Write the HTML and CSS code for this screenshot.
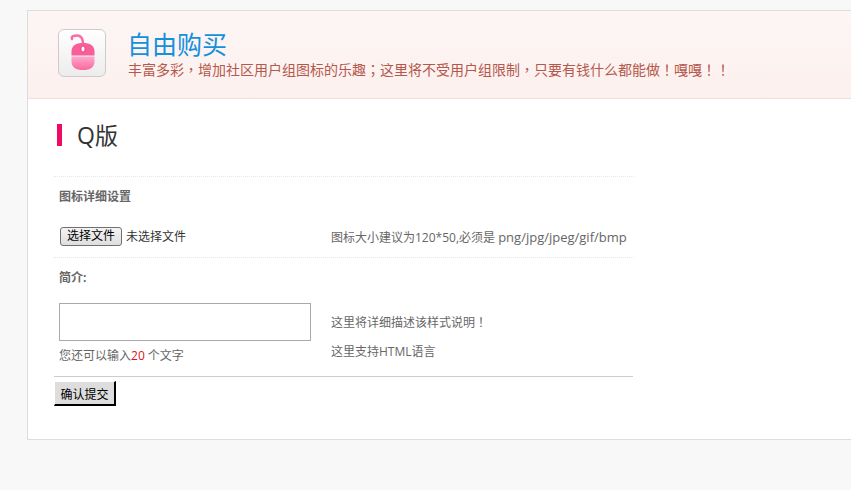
FILE: index.html
```html
<!DOCTYPE html>
<html lang="zh">
<head>
<meta charset="utf-8">
<title>自由购买</title>
<link rel="stylesheet" href="styles.css">
</head>
<body>
<main class="panel">
  <header class="head">
    <div class="logo">
      <svg width="46" height="46" viewBox="0 0 46 46">
        <defs>
          <linearGradient id="lower" x1="0" y1="0" x2="0" y2="1">
            <stop offset="0" stop-color="#ffa9ca"/>
            <stop offset="1" stop-color="#f9689f"/>
          </linearGradient>
        </defs>
        <path d="M13 9C12 6 15 5.500 18 5.500C22 5.500 24 9 24 14" class="cord"/>
        <path d="M12.500 25.500V21.500C12.500 15.500 17 13 24 13C31 13 35.500 15.500 35.500 21.500V25.500Z" class="m1"/>
        <path d="M12.500 26.500H35.500V31.500C35.500 37.500 31 40 24 40C17 40 12.500 37.500 12.500 31.500Z" fill="url(#lower)"/>
        <rect x="22" y="16" width="4" height="6" rx="2" class="wheel"/>
      </svg>
    </div>
    <div class="head-text">
      <h1>自由购买</h1>
      <p>丰富多彩<span class="pc" lang="zh-TW">，</span>增加社区用户组图标的乐趣<span class="pc" lang="zh-TW">；</span>这里将不受用户组限制<span class="pc" lang="zh-TW">，</span>只要有钱什么都能做<span class="pc" lang="zh-TW">！</span>嘎嘎<span class="pc" lang="zh-TW">！！</span></p>
    </div>
  </header>
  <section class="body">
    <h2>Q版</h2>
    <form class="form">
      <div class="row-title dotted"><b>图标详细设置</b></div>
      <div class="row file-row">
        <div class="col-a file-pick">
          <button class="file-btn" type="button">选择文件</button>
          <span class="file-name">未选择文件</span>
        </div>
        <div class="col-b">图标大小建议为120*50,必须是 <span class="ext">png/jpg/jpeg/gif/bmp</span></div>
      </div>
      <div class="row-title dotted"><b>简介:</b></div>
      <div class="row desc-row">
        <div class="col-a">
          <input class="text" type="text">
          <div class="count">您还可以输入<span class="red">20</span> 个文字</div>
        </div>
        <div class="col-b notes">
          <div>这里将详细描述该样式说明<span class="pc" lang="zh-TW">！</span></div>
          <div>这里支持HTML语言</div>
        </div>
      </div>
      <div class="actions"><button class="submit" type="button">确认提交</button></div>
    </form>
  </section>
</main>
</body>
</html>
```
FILE: styles.css
```css
html, body { margin: 0; padding: 0; }
body {
  width: 851px;
  height: 490px;
  overflow: hidden;
  background: #f8f8f8;
  font-family: "Open Sans", "Noto Sans CJK SC", sans-serif;
  font-size: 12px;
  color: #666;
}
.panel {
  box-sizing: border-box;
  width: 860px;
  height: 430px;
  margin: 10px 0 0 27px;
  background: #fff;
  border: 1px solid #ddd;
}
.head {
  display: flex;
  height: 88px;
  box-sizing: border-box;
  padding: 18px 0 0 30px;
  background: linear-gradient(#fdf6f5, #fcf0ee);
  border-bottom: 1px solid #f3dcd9;
}
.logo {
  box-sizing: border-box;
  width: 48px;
  height: 48px;
  background: linear-gradient(#fff, #ececec);
  border: 1px solid #ccc;
  border-radius: 6px;
}
.logo svg { display: block; }
.cord { fill: none; stroke: #f96fa5; stroke-width: 2.500; stroke-linecap: round; }
.m1 { fill: #f85f9a; }
.wheel { fill: #fff; stroke: #e8417f; }
.head-text { margin-left: 22px; }
h1 {
  margin: 0 0 0 -1px;
  font-size: 25px;
  line-height: 30px;
  font-weight: 400;
  color: #1490dc;
}
.head-text p {
  margin: 2px 0 0;
  font-size: 14px;
  line-height: 17px;
  color: #b5584c;
}
.pc { font-family: "Noto Sans CJK TC", sans-serif; }
.body { padding: 25px 0 0 26px; }
h2 {
  margin: 0 0 0 3px;
  padding-left: 15px;
  height: 22px;
  font-size: 23px;
  line-height: 22px;
  font-weight: 400;
  color: #333;
  border-left: 5px solid #ef0a66;
}
.form { width: 580px; margin-top: 30px; }
.row-title {
  box-sizing: border-box;
  height: 41px;
  padding: 12px 0 0 5px;
  line-height: 16px;
}
.dotted { border-top: 1px dotted #e8e8e8; }
.row { display: flex; }
.col-a { width: 277px; padding-left: 5px; box-sizing: border-box; }
.col-b { line-height: 16px; }
.file-row { height: 40px; align-items: flex-start; }
.file-row .col-b { padding-top: 12px; white-space: nowrap; }
.ext { font-size: 13px; }
.file-pick { display: flex; align-items: center; gap: 4px; padding: 10px 0 0 6px; }
.file-btn {
  box-sizing: border-box;
  width: 62px;
  height: 19px;
  padding: 0;
  font-family: "Liberation Sans", "Noto Sans CJK SC", sans-serif;
  font-size: 12px;
  line-height: 15px;
  color: #000;
  background: linear-gradient(#f4f4f4, #dedede);
  border: 1px solid #707070;
  border-radius: 3px;
}
.file-name { color: #333; line-height: 19px; }
.desc-row { height: 73px; padding-top: 5px; }
.text {
  display: block;
  box-sizing: border-box;
  width: 252px;
  height: 38px;
  margin: 0;
  padding: 0;
  border: 1px solid #aaa;
  background: #fff;
}
.count { margin-top: 7px; line-height: 16px; }
.red { color: #d8121a; }
.notes { padding-top: 11px; }
.notes div { height: 30px; line-height: 16px; }
.actions { border-top: 1px solid #ccc; width: 579px; padding-top: 4px; }
.submit {
  display: block;
  width: 62px;
  height: 25px;
  padding: 0;
  font-family: "Liberation Sans", "Noto Sans CJK SC", sans-serif;
  font-size: 12px;
  color: #000;
  background: #ddd;
  border: 0 solid #000;
  border-width: 1px 2px 2px 1px;
  border-color: #fff #000 #000 #fff;
}
```
